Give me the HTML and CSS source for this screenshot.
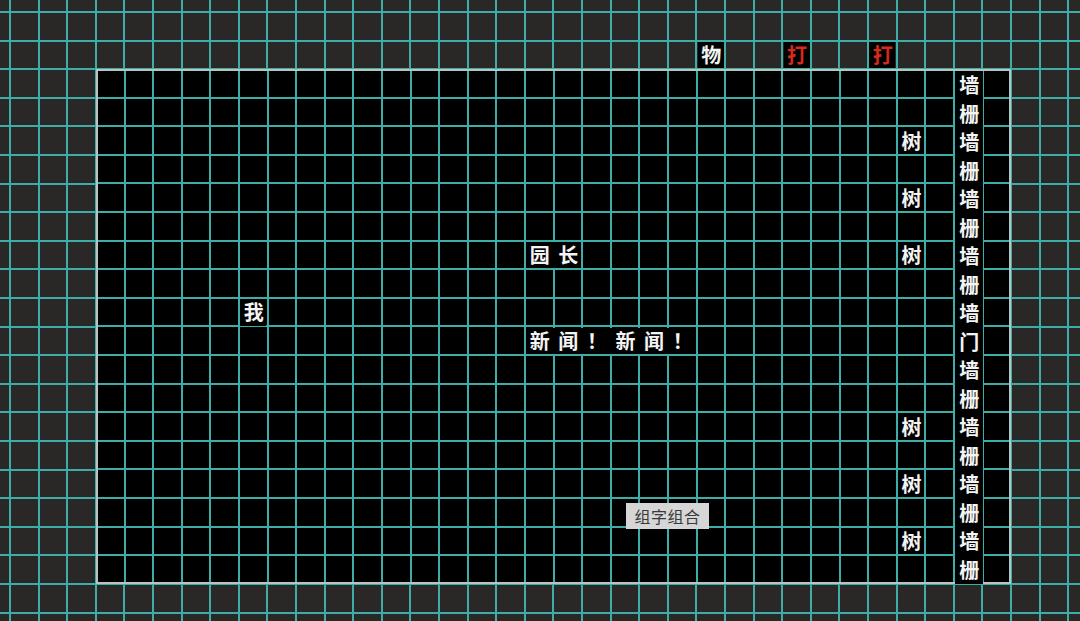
FILE: index.html
```html
<!DOCTYPE html>
<html lang="zh-CN">
<head>
<meta charset="utf-8">
<title>组字组合</title>
<link rel="stylesheet" href="styles.css">
</head>
<body>
<main class="board">
  <section class="field"></section>

  <div class="label col25 row2"><span>物</span></div>
  <div class="label red col28 row2"><span>打</span></div>
  <div class="label red col31 row2"><span>打</span></div>

  <div class="label col9 row11"><span>我</span></div>
  <div class="label span2 col19 row9"><span>园</span><span>长</span></div>
  <div class="label span6 col19 row12"><span>新</span><span>闻</span><span>！</span><span>新</span><span>闻</span><span>！</span></div>

  <div class="label col32 row5"><span>树</span></div>
  <div class="label col32 row7"><span>树</span></div>
  <div class="label col32 row9"><span>树</span></div>
  <div class="label col32 row15"><span>树</span></div>
  <div class="label col32 row17"><span>树</span></div>
  <div class="label col32 row19"><span>树</span></div>

  <div class="wall">
    <span>墙</span><span>栅</span><span>墙</span><span>栅</span><span>墙</span><span>栅</span>
    <span>墙</span><span>栅</span><span>墙</span><span>门</span><span>墙</span><span>栅</span>
    <span>墙</span><span>栅</span><span>墙</span><span>栅</span><span>墙</span><span>栅</span>
  </div>

  <button class="combine" type="button">组字组合</button>
</main>
</body>
</html>
```

FILE: styles.css
```css
html, body {
  margin: 0;
  padding: 0;
}

body {
  width: 1080px;
  height: 621px;
  overflow: hidden;
  background-color: #2a2727;
  background-image:
    repeating-linear-gradient(90deg, #3fada7 9px, #3fada7 11px, transparent 11px, transparent 37.6px),
    repeating-linear-gradient(180deg, #3fada7 11px, #3fada7 13px, transparent 13px, transparent 39.6px);
}

.board {
  display: grid;
  grid-template-columns: repeat(38, 28.6px);
  grid-template-rows: repeat(22, 28.6px);
  margin: 12px 0 0 10px;
  font-family: "Noto Sans CJK SC", "Noto Sans", sans-serif;
}

.field {
  grid-column: 4 / span 32;
  grid-row: 3 / span 18;
  box-sizing: border-box;
  border: 2px solid #b7c4c3;
  background-color: #000;
  background-origin: border-box;
  background-image:
    repeating-linear-gradient(90deg, #3fada7 -1px, #3fada7 1px, transparent 1px, transparent 27.6px),
    repeating-linear-gradient(180deg, #3fada7 -1px, #3fada7 1px, transparent 1px, transparent 27.6px);
}

.label {
  display: grid;
  grid-auto-flow: column;
  grid-auto-columns: 28.6px;
  margin: 1.5px 1px 1px 1.5px;
  background: #000;
  color: #f4f4f4;
  font-weight: 700;
  font-size: 20px;
  line-height: 26px;
}

.label span {
  display: flex;
  align-items: center;
  justify-content: center;
  margin-left: -1.5px;
}

.red { color: #d8291d; }

.span2 { grid-column-end: span 2; }
.span6 { grid-column-end: span 6; }

.col9  { grid-column-start: 9; }
.col19 { grid-column-start: 19; }
.col25 { grid-column-start: 25; }
.col28 { grid-column-start: 28; }
.col31 { grid-column-start: 31; }
.col32 { grid-column-start: 32; }

.row2  { grid-row: 2; }
.row5  { grid-row: 5; }
.row7  { grid-row: 7; }
.row9  { grid-row: 9; }
.row11 { grid-row: 11; }
.row12 { grid-row: 12; }
.row15 { grid-row: 15; }
.row17 { grid-row: 17; }
.row19 { grid-row: 19; }

.wall {
  grid-column: 34;
  grid-row: 3 / span 18;
  display: grid;
  grid-template-rows: repeat(18, minmax(0, 1fr));
  margin: 2px -1px 0 1.5px;
  background: #000;
  color: #f4f4f4;
  font-weight: 700;
  font-size: 20px;
  line-height: 1;
}

.wall span {
  display: flex;
  align-items: center;
  justify-content: center;
}

.combine {
  grid-column: 22 / span 4;
  grid-row: 18 / span 2;
  align-self: start;
  justify-self: start;
  margin: 4.5px 0 0 15.5px;
  width: 83px;
  height: 26px;
  padding: 0;
  border: none;
  border-radius: 0;
  background: #d6d6d6;
  color: #3a3a3a;
  font-family: "Noto Sans CJK SC", "Noto Sans", sans-serif;
  font-size: 16px;
  line-height: 26px;
  letter-spacing: 0.5px;
}
```
